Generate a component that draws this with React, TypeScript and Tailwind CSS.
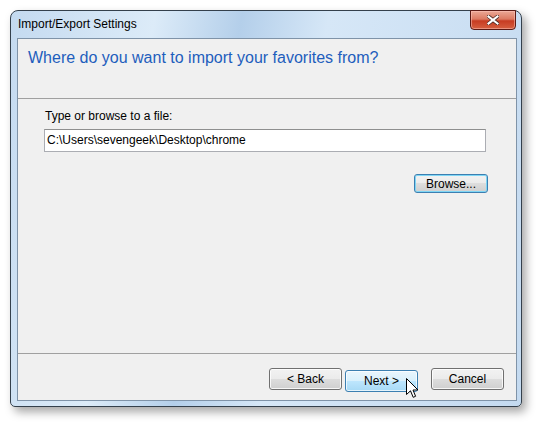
import React from 'react'

const font = { fontFamily: '"Liberation Sans", Arial, sans-serif' }

const btn =
  'h-[22px] w-[73px] rounded-[3px] border border-[#707070] bg-[linear-gradient(to_bottom,#f2f2f2_0%,#ebebeb_49%,#dddddd_50%,#cfcfcf_100%)] text-[12px] text-black shadow-[inset_0_0_0_1px_rgba(255,255,255,0.8)]'

const Cursor = () => (
  <svg width="13" height="21" viewBox="0 0 13 21" className="absolute left-[61px] top-[10px]">
    <path
      d="M0.5 0.5 L0.5 16.5 L4.5 12.8 L7.2 19.3 L9.6 18.3 L7 12 L12 12 Z"
      fill="#fff"
      stroke="#000"
      strokeWidth="1"
      strokeLinejoin="round"
    />
  </svg>
)

export default function App() {
  return (
    <div className="w-[541px] h-[426px] bg-white pl-[10px] pt-[10px]" style={font}>
      {/* Window frame */}
      <div className="relative w-[512px] h-[397px] flex flex-col rounded-t-[8px] rounded-b-[5px] border border-[#34404c] bg-[linear-gradient(100deg,#c4daf0_0%,#dcebf8_25%,#b4cfea_40%,#d6e7f7_55%,#c4daf0_100%)] shadow-[4px_5px_10px_rgba(0,0,0,0.35)]">
        {/* Title bar */}
        <div className="h-[27px] flex items-start pl-[7px] pr-[5px]">
          <span className="mt-[6px] text-[12px] leading-[15px] text-black">Import/Export Settings</span>
          <div className="ml-auto -mt-[1px] w-[46px] h-[20px] flex items-center justify-center rounded-b-[4px] border border-[#5b1a14] bg-[linear-gradient(to_bottom,#eba896_0%,#dc7a62_45%,#c73c22_55%,#d65f40_100%)] shadow-[inset_0_0_0_1px_rgba(255,200,190,0.5)]">
            <svg width="12" height="10" viewBox="0 0 12 10">
              <path d="M1.5 1.5 L10.5 8.5 M10.5 1.5 L1.5 8.5" stroke="#4a2a24" strokeWidth="3.6" strokeLinecap="square" />
              <path d="M1.5 1.5 L10.5 8.5 M10.5 1.5 L1.5 8.5" stroke="#ffffff" strokeWidth="2.2" strokeLinecap="square" />
            </svg>
          </div>
        </div>

        {/* Client area */}
        <div className="flex-1 ml-[6px] mr-[4px] mb-[5px] border border-[#7f93a8] bg-[#f0f0f0] flex flex-col">
          <div className="h-[60px] border-b border-[#a0a0a0] pl-[10px] pt-[9px]">
            <h1 className="text-[16px] leading-[20px] text-[#1e5ebd]">
              Where do you want to import your favorites from?
            </h1>
          </div>

          <div className="flex-1 flex flex-col pl-[26px] pr-[30px] pt-[10px] border-b border-[#a0a0a0]">
            <label className="pl-[1px] text-[12px] leading-[15px] text-black">Type or browse to a file:</label>
            <div className="mt-[5px] h-[23px] border border-[#abadb3] border-t-[#8e8f8f] bg-white flex items-center px-[2px] text-[12px] leading-[15px] text-black">
              C:\Users\sevengeek\Desktop\chrome
            </div>
            <div className="mt-[22px] flex justify-end">
              <button className="-mr-[2px] h-[19px] w-[74px] rounded-[3px] border border-[#3c7fb1] bg-[linear-gradient(to_bottom,#f2f2f2_0%,#ebebeb_49%,#dddddd_50%,#cfcfcf_100%)] text-[12px] text-black shadow-[inset_0_0_0_1px_#7fd6f5]">
                Browse...
              </button>
            </div>
          </div>

          <div className="h-[46px] flex items-start justify-end gap-[3px] pt-[14px] pr-[12px]">
            <button className={btn}>&lt; Back</button>
            <div className="relative">
              <button className="h-[22px] w-[73px] rounded-[3px] border border-[#3c7fb1] bg-[linear-gradient(to_bottom,#eaf6fd_0%,#d9f0fc_49%,#bee6fd_50%,#a7d9f5_100%)] text-[12px] text-black shadow-[inset_0_0_0_1px_rgba(255,255,255,0.7)]">
                Next &gt;
              </button>
              <Cursor />
            </div>
            <div className="w-[7px]" />
            <button className={btn}>Cancel</button>
          </div>
        </div>
      </div>
    </div>
  )
}
